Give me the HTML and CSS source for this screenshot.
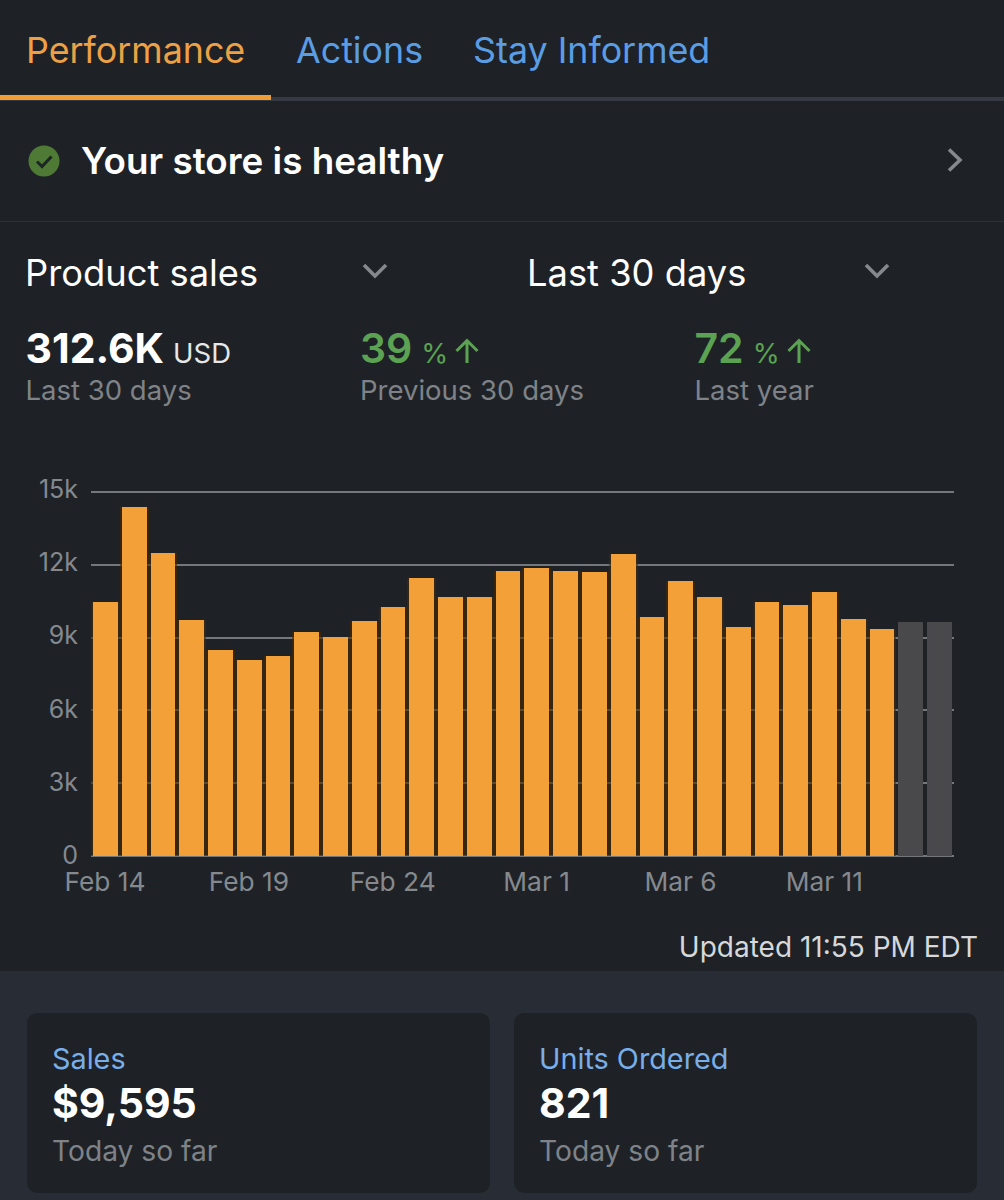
FILE: index.html
```html
<!DOCTYPE html>
<html lang="en">
<head>
    <meta charset="UTF-8">
    <title>Performance</title>
    <link rel="stylesheet" href="styles.css">
</head>
<body>
    <div class="tabs">
        <div class="tab active">Performance</div>
        <div class="tab">Actions</div>
        <div class="tab">Stay Informed</div>
    </div>

    <div class="health">
        <svg class="health-icon" viewBox="0 0 32 32">
            <circle cx="16" cy="16" r="15.5" fill="#4f7a35"/>
            <path d="M9 16.5l5 5 9.5-10" fill="none" stroke="#1c2622" stroke-width="3"/>
        </svg>
        <div class="health-text">Your store is healthy</div>
        <svg class="chevron-right" viewBox="0 0 18 26">
            <path d="M3 2.5l11 10.500-11 10.500" fill="none" stroke="#85888c" stroke-width="3.600"/>
        </svg>
    </div>

    <div class="filters">
        <div class="filter">
            <span class="filter-name">Product sales</span>
            <svg class="chevron-down" viewBox="0 0 26 18"><path d="M2 3l11 11 11-11" fill="none" stroke="#85888c" stroke-width="3.600"/></svg>
        </div>
        <div class="filter">
            <span class="filter-name">Last 30 days</span>
            <svg class="chevron-down" viewBox="0 0 26 18"><path d="M2 3l11 11 11-11" fill="none" stroke="#85888c" stroke-width="3.600"/></svg>
        </div>
    </div>

    <div class="stats">
        <div class="stat">
            <div class="stat-value"><b>312.6K</b> <span class="stat-unit">USD</span></div>
            <div class="stat-label">Last 30 days</div>
        </div>
        <div class="stat up">
            <div class="stat-value">
                <b>39</b> <span class="stat-unit">%</span>
                <svg class="arrow-up" viewBox="0 0 26 26"><path d="M13 25V3M2.500 13L13 2.500 23.500 13" fill="none" stroke="#5ba352" stroke-width="3"/></svg>
            </div>
            <div class="stat-label">Previous 30 days</div>
        </div>
        <div class="stat up">
            <div class="stat-value">
                <b>72</b> <span class="stat-unit">%</span>
                <svg class="arrow-up" viewBox="0 0 26 26"><path d="M13 25V3M2.500 13L13 2.500 23.500 13" fill="none" stroke="#5ba352" stroke-width="3"/></svg>
            </div>
            <div class="stat-label">Last year</div>
        </div>
    </div>

    <div class="chart">
        <div class="y-axis">
            <span>15k</span>
            <span>12k</span>
            <span>9k</span>
            <span>6k</span>
            <span>3k</span>
            <span>0</span>
        </div>
        <div class="plot">
            <div class="grid">
                <i></i><i></i><i></i><i></i><i></i><i></i>
            </div>
            <div class="bars">
                <div class="bar" style="height:254px"></div>
                <div class="bar" style="height:349px"></div>
                <div class="bar" style="height:303px"></div>
                <div class="bar" style="height:236px"></div>
                <div class="bar" style="height:206px"></div>
                <div class="bar" style="height:196px"></div>
                <div class="bar" style="height:200px"></div>
                <div class="bar" style="height:224px"></div>
                <div class="bar" style="height:219px"></div>
                <div class="bar" style="height:235px"></div>
                <div class="bar" style="height:249px"></div>
                <div class="bar" style="height:278px"></div>
                <div class="bar" style="height:259px"></div>
                <div class="bar" style="height:259px"></div>
                <div class="bar" style="height:285px"></div>
                <div class="bar" style="height:288px"></div>
                <div class="bar" style="height:285px"></div>
                <div class="bar" style="height:284px"></div>
                <div class="bar" style="height:302px"></div>
                <div class="bar" style="height:239px"></div>
                <div class="bar" style="height:275px"></div>
                <div class="bar" style="height:259px"></div>
                <div class="bar" style="height:229px"></div>
                <div class="bar" style="height:254px"></div>
                <div class="bar" style="height:251px"></div>
                <div class="bar" style="height:264px"></div>
                <div class="bar" style="height:237px"></div>
                <div class="bar" style="height:227px"></div>
                <div class="bar projected" style="height:234px"></div>
                <div class="bar projected" style="height:234px"></div>
            </div>
        </div>
    </div>
    <div class="x-axis">
        <span>Feb 14</span>
        <span>Feb 19</span>
        <span>Feb 24</span>
        <span>Mar 1</span>
        <span>Mar 6</span>
        <span>Mar 11</span>
    </div>
    <div class="updated">Updated 11:55 PM EDT</div>

    <div class="cards">
        <div class="card">
            <div class="card-title">Sales</div>
            <div class="card-value">$9,595</div>
            <div class="card-note">Today so far</div>
        </div>
        <div class="card">
            <div class="card-title">Units Ordered</div>
            <div class="card-value">821</div>
            <div class="card-note">Today so far</div>
        </div>
    </div>
</body>
</html>
```

FILE: styles.css
```css
* {
    margin: 0;
    padding: 0;
    box-sizing: border-box;
}

html {
    background: #1e2227;
}

body {
    width: 1004px;
    height: 1200px;
    overflow: hidden;
    background: #1e2227;
    color: #fff;
    font-family: Inter, "Liberation Sans", sans-serif;
}

/* tabs */
.tabs {
    display: flex;
    height: 101px;
    border-bottom: 4px solid #353a42;
}

.tab {
    height: 100px;
    padding: 27px 25px 0;
    font-size: 35.800px;
    line-height: 46px;
    color: #5a9de4;
}

.tab.active {
    flex: none;
    width: 271px;
    padding-left: 26px;
    color: #eda044;
    border-bottom: 5px solid #f09d36;
}

/* health row */
.health {
    display: flex;
    align-items: center;
    height: 121px;
    padding: 0 40px 0 28px;
    border-bottom: 1px solid #2e3238;
}

.health-icon {
    width: 32px;
    height: 32px;
}

.health-text {
    flex: 1;
    margin-left: 21px;
    font-size: 36.800px;
    font-weight: 600;
    line-height: 46px;
}

.chevron-right {
    width: 18px;
    height: 26px;
    margin-bottom: 3px;
}

/* dropdowns */
.filters {
    display: flex;
    padding: 28px 0 0 25px;
}

.filter {
    flex: none;
    display: flex;
    align-items: center;
    width: 502px;
    height: 46px;
}

.filter-name {
    width: 337px;
    font-size: 36.300px;
    line-height: 46px;
}

.chevron-down {
    width: 26px;
    height: 18px;
    margin-bottom: 4px;
}

/* numbers */
.stats {
    display: flex;
    padding-left: 25.500px;
    margin-top: 30px;
}

.stat {
    flex: none;
    width: 334.500px;
}

.stat-value {
    display: flex;
    align-items: baseline;
    gap: 9px;
    height: 44px;
    font-size: 41px;
    line-height: 44px;
}

.stat-value b {
    font-weight: 700;
}

.stat-unit {
    font-size: 27.500px;
    color: #e6e7e8;
}

.up .stat-value b,
.up .stat-unit {
    color: #5ba352;
}

.up .stat-value b {
    font-weight: 600;
}

.arrow-up {
    width: 26px;
    height: 26px;
    margin-left: -3px;
    align-self: center;
    margin-top: 6px;
}

.stat-label {
    margin-top: 3px;
    font-size: 27.500px;
    line-height: 34px;
    color: #7f8388;
}

/* chart */
.chart {
    display: flex;
    margin-top: 84px;
}

.y-axis {
    display: flex;
    flex-direction: column;
    justify-content: space-between;
    align-items: flex-end;
    width: 78px;
    height: 390px;
    margin: -14px 0 -10px;
    font-size: 25px;
    line-height: 24px;
    color: #85898e;
}

.plot {
    position: relative;
    width: 863px;
    height: 366px;
    margin-left: 13px;
}

.grid {
    display: flex;
    flex-direction: column;
    justify-content: space-between;
    height: 366px;
}

.grid i {
    display: block;
    height: 2px;
    background: #74777b;
}

.bars {
    position: absolute;
    top: 0;
    left: 2px;
    right: 2px;
    bottom: 1px;
    display: flex;
    align-items: flex-end;
    gap: 4px;
}

.bar {
    flex: 1;
    background: #f4a039;
    box-shadow: 2px 0 0 rgba(70, 40, 0, 0.6), -2px 0 0 rgba(70, 40, 0, 0.6);
}

.bar.projected {
    background: #49494b;
    box-shadow: none;
}

.x-axis {
    display: flex;
    padding-left: 33px;
    margin-top: 10px;
    font-size: 26.300px;
    line-height: 30px;
    color: #85898e;
}

.x-axis span {
    flex: none;
    width: 143.900px;
    text-align: center;
}

.updated {
    margin-top: 33px;
    padding-right: 26px;
    text-align: right;
    font-size: 28px;
    line-height: 34px;
    color: #d6d8da;
}

/* bottom cards */
.cards {
    display: flex;
    gap: 24px;
    height: 240px;
    margin-top: 7px;
    padding: 42px 27px 0;
    background: #282d35;
}

.card {
    width: 463px;
    height: 180px;
    padding: 29px 25px 0;
    border-radius: 10px;
    background: #1e2227;
}

.card-title {
    font-size: 28.800px;
    line-height: 34px;
    color: #79aee8;
}

.card-value {
    font-size: 41px;
    font-weight: 700;
    line-height: 54px;
}

.card-note {
    margin-top: 3px;
    font-size: 28.200px;
    line-height: 36px;
    color: #7f8388;
}
```
